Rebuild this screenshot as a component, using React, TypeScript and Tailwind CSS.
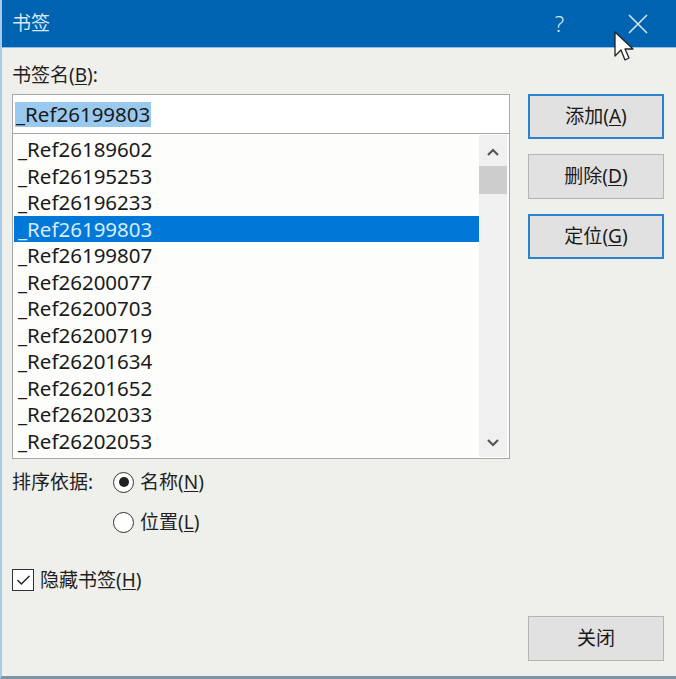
import { Check } from 'lucide-react';

const items = [
  '_Ref26189602',
  '_Ref26195253',
  '_Ref26196233',
  '_Ref26199803',
  '_Ref26199807',
  '_Ref26200077',
  '_Ref26200703',
  '_Ref26200719',
  '_Ref26201634',
  '_Ref26201652',
  '_Ref26202033',
  '_Ref26202053',
];

const ui = { fontFamily: '"Noto Sans", "Noto Sans CJK SC", sans-serif' };

function DlgButton({ label, hot, focused, className = '' }: { label: string; hot?: string; focused?: boolean; className?: string }) {
  return (
    <button
      className={`w-[136px] h-[45px] bg-[#e1e1e1] text-[19px] text-[#1a1a1a] flex items-center justify-center ${
        focused ? 'border-2 border-[#2b83d0]' : 'border border-[#b4b4b4]'
      } ${className}`}
      style={ui}
    >
      {label}
      {hot && (
        <>
          (<span className="underline underline-offset-2">{hot}</span>)
        </>
      )}
    </button>
  );
}

export default function App() {
  return (
    <div className="relative w-[676px] h-[679px] bg-[#efefeb] flex flex-col overflow-hidden border-l-2 border-[#a9cbe6] border-b-[3px] border-b-[#7f95a6]">
      {/* title bar */}
      <div className="h-[47px] bg-[#0063b1] flex items-center pl-[10px] text-[#d7e8f6] shrink-0" style={ui}>
        <span className="text-[19px]">书签</span>
        <span className="ml-auto mr-[64px] text-[22px] font-light">?</span>
        <svg width="20" height="20" viewBox="0 0 20 20" className="mr-[28px]">
          <path d="M1 1 L19 19 M19 1 L1 19" stroke="#d7e8f6" strokeWidth="1.6" />
        </svg>
      </div>
      <div className="h-px bg-[#8fc0e8] shrink-0" />

      <div className="flex flex-1 pl-[10px] pr-[12px]">
        {/* left column */}
        <div className="w-[498px] flex flex-col">
          <div className="mt-[14px] h-[26px] text-[19px] text-[#1f1f1f] leading-[26px]" style={ui}>
            书签名(<span className="underline underline-offset-2">B</span>):
          </div>
          <div className="mt-[6px] h-[40px] bg-white border border-[#a8a8a8] flex items-center pl-[2px]">
            <span className="bg-[#99c9ef] text-[20.5px] leading-[25px] px-px text-[#1a1a1a]" style={ui}>_Ref26199803</span>
          </div>
          <div className="h-[325px] bg-[#fdfdfc] border border-t-0 border-[#a8a8a8] flex">
            <div className="flex-1 pt-[2px] pl-[1px]">
              {items.map((it, i) => (
                <div
                  key={it}
                  className={`h-[26.5px] leading-[26.5px] text-[20.5px] pl-[4px] ${
                    i === 3 ? 'bg-[#0078d7] text-[#d9ecfb]' : 'text-[#1a1a1a]'
                  }`}
                  style={ui}
                >
                  {it}
                </div>
              ))}
            </div>
            <div className="w-[28px] bg-[#f0f0f0] flex flex-col items-center mt-px mr-[2px] mb-px">
              <svg width="14" height="10" viewBox="0 0 14 10" className="mt-[12px]">
                <path d="M2 8 L7 3 L12 8" stroke="#555" strokeWidth="2.2" fill="none" />
              </svg>
              <div className="w-full h-[28px] bg-[#cdcdcd] mt-[9px]" />
              <svg width="14" height="10" viewBox="0 0 14 10" className="mt-auto mb-[9px]">
                <path d="M2 2 L7 7 L12 2" stroke="#555" strokeWidth="2.2" fill="none" />
              </svg>
            </div>
          </div>

          {/* sort by */}
          <div className="mt-[10px] flex text-[19px] text-[#1f1f1f]" style={ui}>
            <span className="leading-[26px]">排序依据:</span>
            <div className="ml-[20px] flex flex-col gap-[14px]">
              <label className="flex items-center gap-[6px] leading-[26px]">
                <span className="w-[21px] h-[21px] rounded-full border-[1.5px] border-[#333] bg-white flex items-center justify-center">
                  <span className="w-[10px] h-[10px] rounded-full bg-[#222]" />
                </span>
                <span>名称(<span className="underline underline-offset-2">N</span>)</span>
              </label>
              <label className="flex items-center gap-[6px] leading-[26px]">
                <span className="w-[21px] h-[21px] rounded-full border-[1.5px] border-[#333] bg-white" />
                <span>位置(<span className="underline underline-offset-2">L</span>)</span>
              </label>
            </div>
          </div>

          <label className="mt-[32px] flex items-center gap-[6px] text-[19px] text-[#1f1f1f] leading-[26px]" style={ui}>
            <span className="w-[22px] h-[22px] border-[1.5px] border-[#333] bg-white flex items-center justify-center">
              <Check className="w-[17px] h-[17px] text-[#222]" strokeWidth={2} />
            </span>
            <span>隐藏书签(<span className="underline underline-offset-2">H</span>)</span>
          </label>
        </div>

        {/* right column */}
        <div className="ml-auto flex flex-col pt-[46px] pb-[15px]">
          <DlgButton label="添加" hot="A" focused />
          <DlgButton label="删除" hot="D" className="mt-[15px]" />
          <DlgButton label="定位" hot="G" focused className="mt-[15px]" />
          <DlgButton label="关闭" className="mt-auto" />
        </div>
      </div>

      {/* mouse pointer */}
      <svg width="24" height="34" viewBox="0 0 24 34" className="absolute left-[612px] top-[31px]">
        <path d="M1 1 L1 25 L7 19 L11 29 L15 27 L11 18 L19 18 Z" fill="#fff" stroke="#222" strokeWidth="1.3" strokeLinejoin="round" />
      </svg>
    </div>
  );
}
